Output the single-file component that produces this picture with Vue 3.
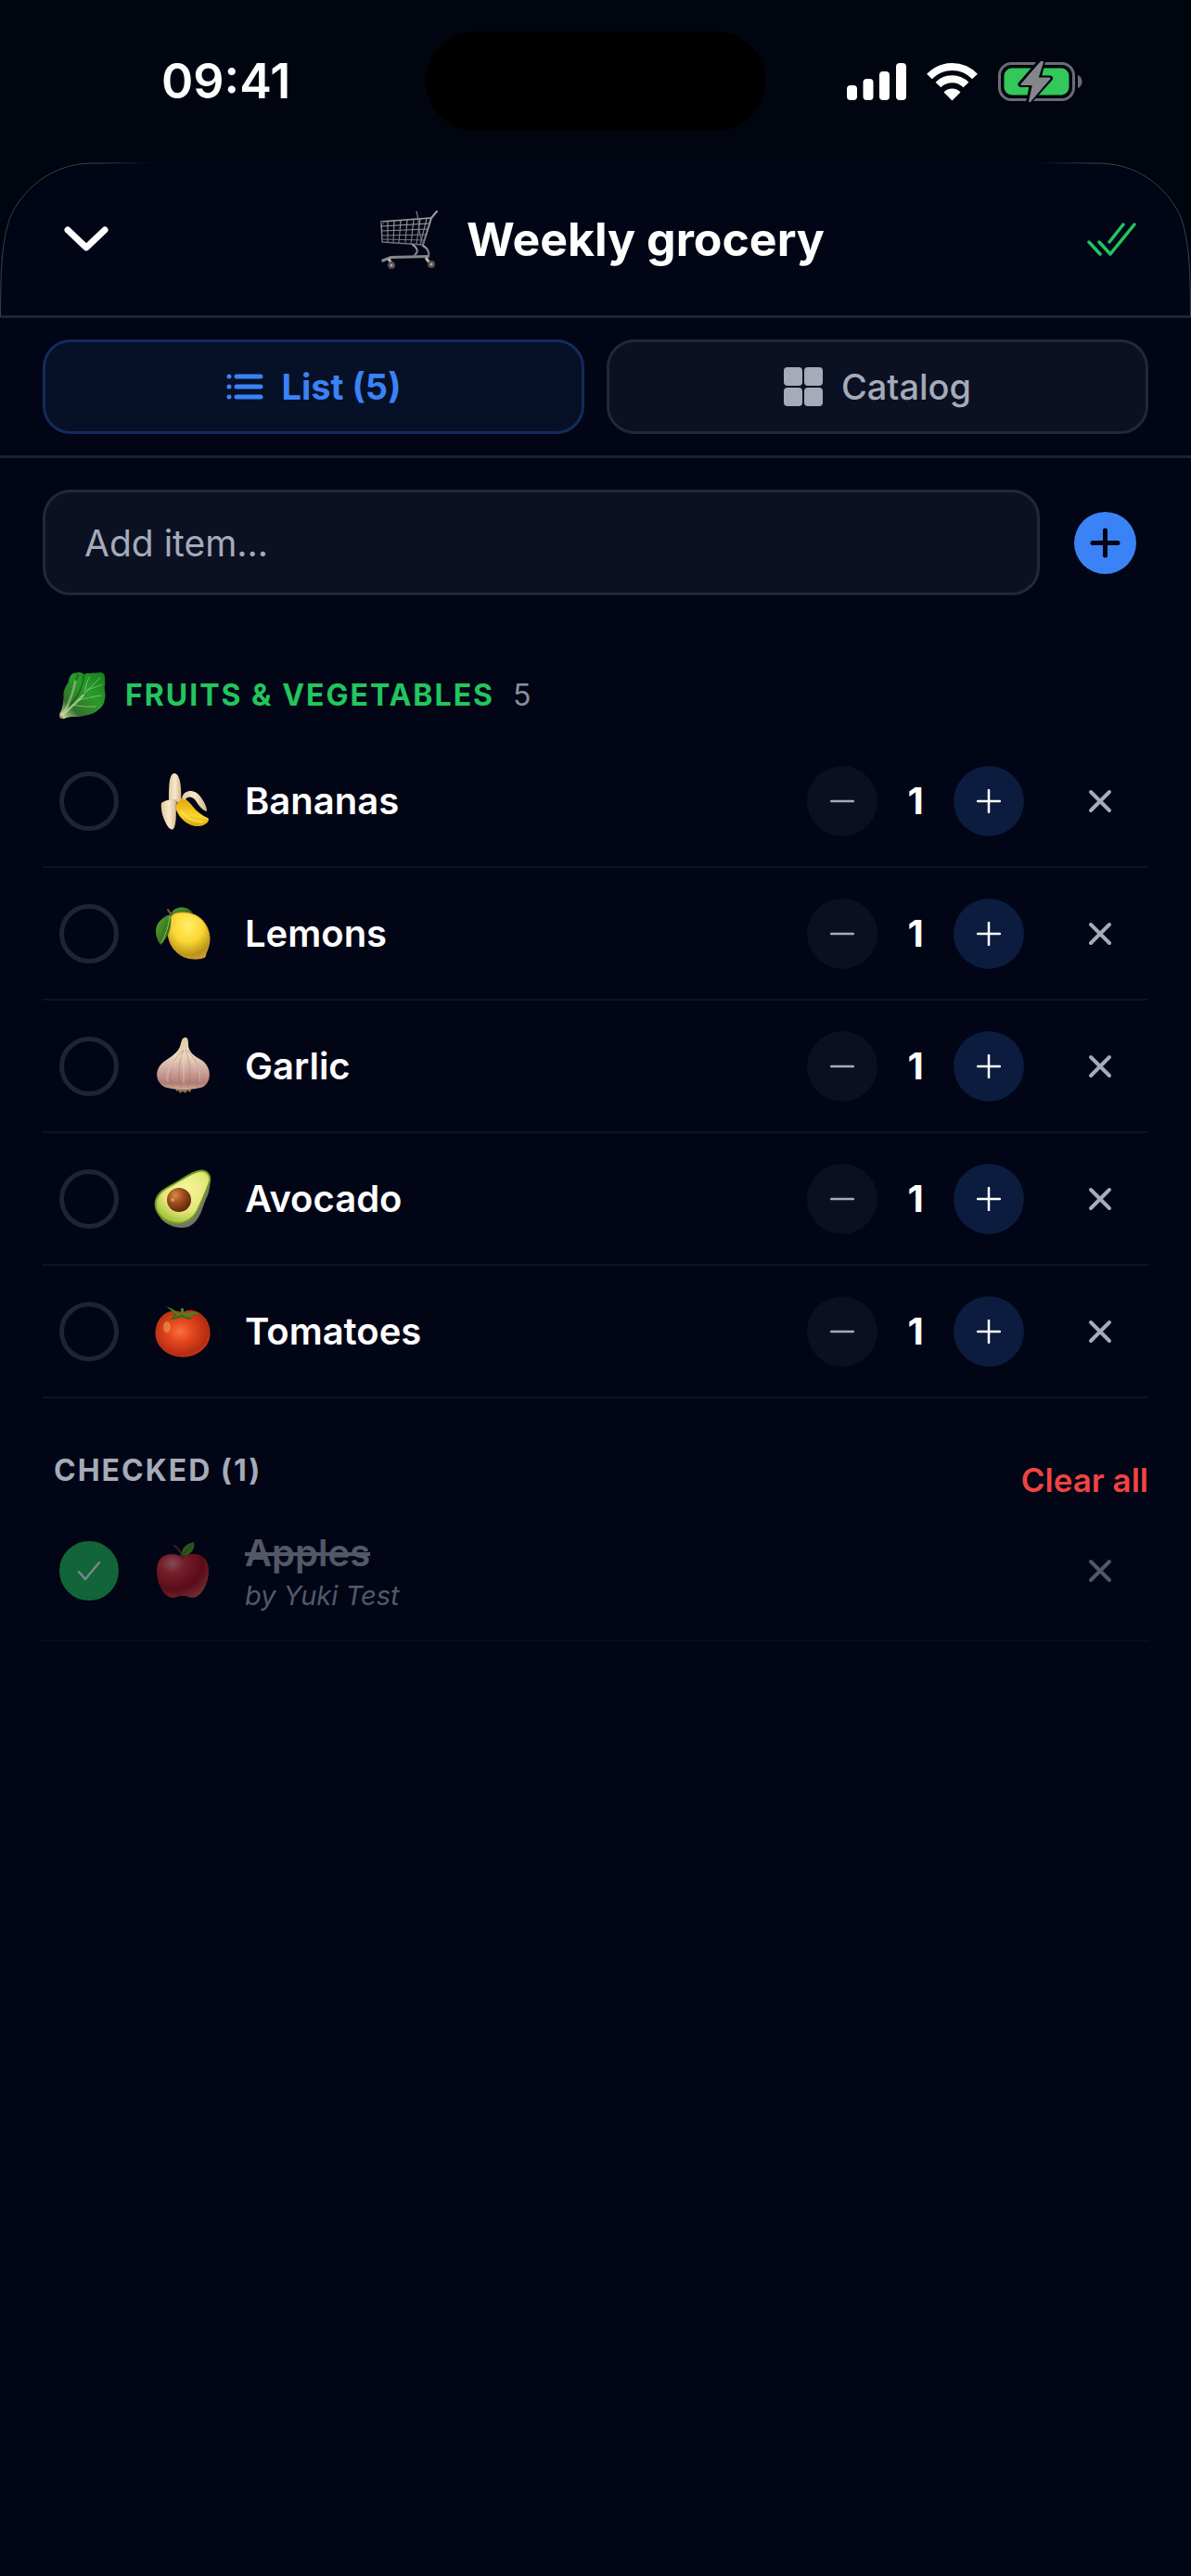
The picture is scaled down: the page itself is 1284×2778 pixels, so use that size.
<template>
  <div class="screen">
    <!-- shared food drawings -->
    <svg class="sprite" width="0" height="0" aria-hidden="true">
      <defs>
        <linearGradient id="gPeel" x1="0" y1="0" x2="1" y2="0">
          <stop offset="0" stop-color="#e2c9a0" />
          <stop offset="0.5" stop-color="#f8e8cc" />
          <stop offset="1" stop-color="#d3b58c" />
        </linearGradient>
        <linearGradient id="gBanana" x1="0.3" y1="0" x2="0.2" y2="1">
          <stop offset="0" stop-color="#e0a10c" />
          <stop offset="0.6" stop-color="#fbd52b" />
          <stop offset="1" stop-color="#c9a010" />
        </linearGradient>
        <radialGradient id="gLemon" cx="0.48" cy="0.28" r="0.8">
          <stop offset="0" stop-color="#fff06a" />
          <stop offset="0.45" stop-color="#fbd734" />
          <stop offset="0.8" stop-color="#b9951a" />
          <stop offset="1" stop-color="#d79a34" />
        </radialGradient>
        <linearGradient id="gLeaf" x1="0" y1="0" x2="1" y2="1">
          <stop offset="0" stop-color="#62a637" />
          <stop offset="1" stop-color="#1d5611" />
        </linearGradient>
        <linearGradient id="gGarlic" x1="0" y1="0" x2="0" y2="1">
          <stop offset="0" stop-color="#e3cca0" />
          <stop offset="0.35" stop-color="#ead7c0" />
          <stop offset="0.62" stop-color="#cfa79e" />
          <stop offset="0.88" stop-color="#b07c74" />
          <stop offset="1" stop-color="#cfae98" />
        </linearGradient>
        <radialGradient id="gAvocado" cx="0.55" cy="0.35" r="0.65">
          <stop offset="0" stop-color="#f7f5a0" />
          <stop offset="0.65" stop-color="#e3e777" />
          <stop offset="1" stop-color="#a8c43f" />
        </radialGradient>
        <radialGradient id="gPit" cx="0.35" cy="0.3" r="0.75">
          <stop offset="0" stop-color="#d98a48" />
          <stop offset="0.45" stop-color="#9c4e1c" />
          <stop offset="1" stop-color="#5d2609" />
        </radialGradient>
        <radialGradient id="gTomato" cx="0.45" cy="0.45" r="0.6">
          <stop offset="0" stop-color="#f9703e" />
          <stop offset="0.4" stop-color="#e2461f" />
          <stop offset="0.85" stop-color="#b52d12" />
          <stop offset="1" stop-color="#d83316" />
        </radialGradient>
        <radialGradient id="gApple" cx="0.3" cy="0.22" r="0.85">
          <stop offset="0" stop-color="#ff9a92" />
          <stop offset="0.25" stop-color="#ea3a3f" />
          <stop offset="0.7" stop-color="#b5111d" />
          <stop offset="1" stop-color="#e0504c" />
        </radialGradient>
        <linearGradient id="gGreens" x1="1" y1="0" x2="0" y2="1">
          <stop offset="0" stop-color="#14801f" />
          <stop offset="0.4" stop-color="#2a9a2c" />
          <stop offset="0.75" stop-color="#35702c" />
          <stop offset="1" stop-color="#e6f0b8" />
        </linearGradient>
        <linearGradient id="gSteel" x1="0" y1="0" x2="0" y2="1">
          <stop offset="0" stop-color="#a3a3a6" />
          <stop offset="1" stop-color="#6f7075" />
        </linearGradient>
        <linearGradient id="gEdge" x1="1" y1="0" x2="0.3" y2="0.3">
          <stop offset="0" stop-color="#3a3e4a" stop-opacity="0" />
          <stop offset="0.4" stop-color="#3a3e4a" />
          <stop offset="1" stop-color="#3a3e4a" />
        </linearGradient>
      </defs>

      <symbol id="bananas" viewBox="0 0 64 64">
        <path d="M28 30C31 26 38 31 43 38C48 44 54 48 59 50C62 52 58 58 50 59C38 60 27 50 24 38Z" fill="url(#gBanana)" />
        <path d="M30 42C35 50 44 55 54 54" fill="none" stroke="#ffe760" stroke-width="2" opacity="0.7" />
        <path d="M31 28C35 18 46 20 51 27C55 32 58 38 58 43C54 42 50 38 47 33C44 27 38 25 34 31Z" fill="url(#gPeel)" />
        <path d="M17 30C17 17 17 2 23 2C29 2 31 17 30 31C27 34 20 34 17 30Z" fill="url(#gPeel)" />
        <path d="M9 34C14 30 21 30 26 30C24 39 26 52 23 60C21 65 17 62 14 56C10 49 8 40 9 34Z" fill="url(#gPeel)" />
        <path d="M25 31C24 37 25 45 24 54" fill="none" stroke="#a88c5c" stroke-width="1" opacity="0.6" />
      </symbol>

      <symbol id="lemons" viewBox="0 0 64 64">
        <path d="M19 10C24 2 37 1 43 10C36 12 26 12 19 10Z" fill="url(#gLeaf)" />
        <path d="M18 13C24 9 32 8 40 10C54 13 61 26 61 38C61 46 57 51 56 57C50 60 38 60 30 55C17 47 13 32 18 13Z" fill="url(#gLemon)" stroke="#d9a336" stroke-width="1" />
        <path d="M19 11C9 14 3 21 3 29C3 36 6 41 8 44C16 37 21 25 19 11Z" fill="url(#gLeaf)" />
        <path d="M18 13C17 24 13 34 9 42" fill="none" stroke="#8cc261" stroke-width="1" />
        <path d="M20 12L16 6" stroke="#7c5a35" stroke-width="2" stroke-linecap="round" />
      </symbol>

      <symbol id="garlic" viewBox="0 0 64 64">
        <path d="M24 55H42L40 60L37 58L35 61L32 59L29 61L27 58L25 59Z" fill="#8d6b4c" />
        <path d="M34 1C37 0 38 3 38 8C38 17 45 21 52 25C64 33 63 49 54 54C44 58 22 58 12 54C2 48 1 34 13 26C22 20 29 15 30 7C31 3 32 1 34 1Z" fill="url(#gGarlic)" />
        <path d="M32 15C20 26 15 42 21 55M33 14C27 29 27 43 30 56M35 14C40 28 41 43 38 56M37 15C48 25 52 42 46 55" fill="none" stroke="#a37268" stroke-width="1" opacity="0.45" />
        <path d="M26 25C16 34 14 43 16 49M33 24V50M42 25C49 33 51 41 50 48" fill="none" stroke="#fff1e2" stroke-width="2" opacity="0.2" />
      </symbol>

      <symbol id="avocado" viewBox="0 0 64 64">
        <path d="M53 5C63 4 63 16 59 28C53 39 52 56 38 62C27 65 16 61 8 53Z" fill="#77736a" />
        <path d="M49 2C58 0 64 7 60 16C56 27 53 33 49 42C45 52 35 60 23 58C10 56 1 46 3 34C6 22 20 18 29 12C36 8 41 4 49 2Z" fill="url(#gAvocado)" stroke="#6f9a26" stroke-width="2" />
        <ellipse cx="28" cy="33" rx="13" ry="13" fill="url(#gPit)" />
        <circle cx="21" cy="33" r="2" fill="#eeb58a" opacity="0.6" />
      </symbol>

      <symbol id="tomatoes" viewBox="0 0 64 64">
        <path d="M32 12C40 5 61 12 61 34C61 50 46 59 32 59C17 59 3 49 3 34C3 15 18 6 32 12Z" fill="url(#gTomato)" stroke="#c23615" stroke-width="1" />
        <ellipse cx="15" cy="27" rx="4" ry="6" fill="#f0a049" opacity="0.6" />
        <path d="M18 12C24 12 27 16 31 16C38 16 43 13 50 13C43 9 37 12 33 14L33 7L30 7L30 14C26 12 23 7 14 5C18 8 21 10 24 13Z" fill="#3c8b1d" />
        <path d="M25 13C22 14 22 17 21 18C27 18 28 15 31 15C35 17 38 18 41 18" fill="none" stroke="#2f6e17" stroke-width="2" />
      </symbol>

      <symbol id="apples" viewBox="0 0 64 64">
        <path d="M32 17C42 11 60 12 60 32C60 47 51 61 43 61C39 61 37 59 32 59C27 59 25 61 21 61C12 61 4 46 4 32C4 13 20 11 32 17Z" fill="url(#gApple)" />
        <path d="M32 19C31 12 28 8 23 5" fill="none" stroke="#7b4028" stroke-width="2" stroke-linecap="round" />
        <path d="M31 16C30 8 35 3 44 1C46 9 40 16 31 16Z" fill="#57a526" />
        <path d="M32 15L42 4" stroke="#2f6d14" stroke-width="1" />
      </symbol>

      <symbol id="greens" viewBox="0 0 64 64">
        <path d="M4 55C8 49 8 42 9 34C8 25 12 20 15 15C16 7 20 2 26 3C30 1 34 4 36 5C39 2 43 5 46 3C50 4 56 1 60 4C63 8 61 12 62 17C60 23 63 28 62 34C61 41 60 45 55 49C49 55 42 57 35 58C27 60 18 58 11 61C8 64 3 59 4 55Z" fill="url(#gGreens)" />
        <path d="M16 43C18 32 22 18 28 5M35 5C34 18 28 33 18 44" fill="none" stroke="#0f5a1b" stroke-width="2" opacity="0.7" />
        <path d="M6 58C21 46 39 26 56 9M26 38C38 36 48 33 57 32M20 44C32 46 42 47 50 46M36 28C37 20 40 12 42 8M39 25C47 22 54 20 58 18" fill="none" stroke="#a8db84" stroke-width="1" stroke-linecap="round" opacity="0.7" />
        <path d="M6 58C16 50 26 40 34 32M8 56C14 47 19 36 24 14" fill="none" stroke="#d7eeb0" stroke-width="3" stroke-linecap="round" opacity="0.5" />
        <path d="M4 56L9 61C6 63 2 60 4 56Z" fill="#a98a65" />
      </symbol>

      <symbol id="cart" viewBox="0 0 64 64">
        <g fill="none" stroke="url(#gSteel)" stroke-linecap="round" stroke-linejoin="round">
          <path d="M2 13L56 9L47 38L3 35Z" stroke-width="1.4" />
          <path d="M2 18L54 15M3 23L52 21M3 28L51 27M3 32L49 33" stroke-width="1.1" />
          <path d="M9 13V35M16 12L15 36M23 12L21 36M30 11L28 36M37 11L34 37M44 10L40 37M51 10L44 38" stroke-width="1.1" />
          <path d="M40 2C43 12 42 24 46 36" stroke-width="1" />
          <path d="M47 38L56 9L62 2" stroke-width="2" />
          <path d="M36 38C42 42 42 46 38 49M47 39C53 42 54 46 53 51" stroke-width="2" />
        </g>
        <path d="M2 54L12 50L53 49V52L13 53L3 57Z" fill="#85868b" />
        <path d="M10 53L14 60M50 52L56 60" stroke="#b9b6b3" stroke-width="3" />
        <circle cx="13" cy="60" r="4" fill="#57504c" />
        <circle cx="56" cy="59" r="4" fill="#57504c" />
        <circle cx="13" cy="60" r="1.5" fill="#b8aaa2" />
        <circle cx="56" cy="59" r="1.5" fill="#b8aaa2" />
        <path d="M2 13H5V16H2Z" fill="#17455c" />
      </symbol>
    </svg>

    <div class="status">
      <time class="clock">09:41</time>
      <div class="island"></div>
      <div class="indicators">
        <svg width="64" height="42" viewBox="0 0 64 42" fill="#fff" aria-hidden="true">
          <rect x="0" y="25" width="11" height="16" rx="4" />
          <rect x="17.500" y="18" width="11" height="23" rx="4" />
          <rect x="35" y="10" width="11" height="31" rx="4" />
          <rect x="53" y="1" width="11" height="40" rx="4" />
        </svg>
        <svg width="57" height="42" viewBox="0 0 57 42" aria-hidden="true">
          <path d="M28.500 41.500L19.500 32.500C24 27 33 27 37.500 32.500Z" fill="#fff" />
          <path d="M13.500 24.500C21.500 16 35.500 16 43.500 24.500M4 15.500C17.500 1.500 39.500 1.500 53 15.500" fill="none" stroke="#fff" stroke-width="8" />
        </svg>
        <svg width="91" height="44" viewBox="0 0 91 44" aria-hidden="true">
          <rect x="1.500" y="2.500" width="80" height="39" rx="13" fill="none" stroke="#6b6d74" stroke-width="3" />
          <rect x="6.500" y="7.500" width="70" height="29" rx="8.500" fill="#34c759" />
          <path d="M86 15C92 17 92 27 86 29Z" fill="#6b6d74" />
          <path d="M46 0L24.500 25H37L33 44L56 18.500H43.500L48 0Z" fill="#85868b" stroke="#010510" stroke-width="6" stroke-linejoin="round" />
          <path d="M46.500 1L25.500 25H38L34 43.500L55.500 18.500H42.500L48 1Z" fill="#85868b" stroke="#85868b" stroke-width="2" stroke-linejoin="round" />
        </svg>
      </div>
    </div>

    <main class="sheet">
      <svg class="corner left" width="166" height="166" viewBox="0 0 166 166" aria-hidden="true">
        <path d="M0.500 166C0.500 100 4 82 10 62C17 42 46 1 100 1L165 0.500" fill="none" stroke="url(#gEdge)" stroke-width="1" />
      </svg>
      <svg class="corner right" width="166" height="166" viewBox="0 0 166 166" aria-hidden="true">
        <path d="M0.500 166C0.500 100 4 82 10 62C17 42 46 1 100 1L165 0.500" fill="none" stroke="url(#gEdge)" stroke-width="1" />
      </svg>

      <header class="header">
        <button class="back" aria-label="Close list">
          <svg width="48" height="30" viewBox="0 0 48 30" aria-hidden="true">
            <path d="M4 5L24 24L44 5" fill="none" stroke="#fff" stroke-width="7" stroke-linecap="round" stroke-linejoin="round" />
          </svg>
        </button>
        <div class="title">
          <svg width="64" height="64" aria-hidden="true"><use href="#cart" /></svg>
          <h1>Weekly grocery</h1>
        </div>
        <button class="check-all" aria-label="Check all" @click="checkAll">
          <svg width="53" height="36" viewBox="0 0 53 36" fill="none" stroke="#22c55e" stroke-width="3.500" stroke-linecap="round" stroke-linejoin="round" aria-hidden="true">
            <path d="M2 21L14 34M13 21L25 34L51 2M24 21L39 2" />
          </svg>
        </button>
      </header>

      <nav class="tabs">
        <button class="tab" :class="{ active: tab === 'list' }" @click="tab = 'list'">
          <svg width="40" height="30" viewBox="0 0 40 30" fill="none" stroke="currentColor" stroke-width="5" stroke-linecap="round" aria-hidden="true">
            <path d="M11 4H37M11 15H37M11 26H37M3 4H3.010M3 15H3.010M3 26H3.010" />
          </svg>
          List ({{ items.length }})
        </button>
        <button class="tab" :class="{ active: tab === 'catalog' }" @click="tab = 'catalog'">
          <svg width="42" height="42" viewBox="0 0 42 42" fill="currentColor" aria-hidden="true">
            <rect x="0" y="0" width="20" height="20" rx="4" />
            <rect x="22" y="0" width="20" height="20" rx="4" />
            <rect x="0" y="22" width="20" height="20" rx="4" />
            <rect x="22" y="22" width="20" height="20" rx="4" />
          </svg>
          Catalog
        </button>
      </nav>

      <div class="content">
        <form class="add" @submit.prevent="addItem">
          <input v-model="draft" type="text" placeholder="Add item..." aria-label="Add item" />
          <button aria-label="Add">
            <svg width="67" height="67" viewBox="0 0 67 67" aria-hidden="true">
              <circle cx="33.500" cy="33.500" r="33.500" fill="#3b82f6" />
              <path d="M20 33.500H47M33.500 20V47" stroke="#020617" stroke-width="5" stroke-linecap="round" />
            </svg>
          </button>
        </form>

        <section>
          <h2 class="category">
            <svg width="54" height="54" aria-hidden="true"><use href="#greens" /></svg>
            <span>FRUITS &amp; VEGETABLES</span>
            <span class="count">{{ items.length }}</span>
          </h2>
          <ul>
            <li v-for="item in items" :key="item.id" class="row">
              <input type="checkbox" :aria-label="item.name" @change="toggle(item, true)" />
              <svg class="food" width="64" height="64" aria-hidden="true"><use :href="'#' + item.icon" /></svg>
              <div class="name">{{ item.name }}</div>
              <div class="stepper">
                <button aria-label="Less" @click="item.count = Math.max(1, item.count - 1)">
                  <svg width="26" height="26" viewBox="0 0 26 26" aria-hidden="true">
                    <path d="M1 13H25" stroke="#a5abb8" stroke-width="2.500" stroke-linecap="round" />
                  </svg>
                </button>
                <span>{{ item.count }}</span>
                <button class="more" aria-label="More" @click="item.count++">
                  <svg width="26" height="26" viewBox="0 0 26 26" aria-hidden="true">
                    <path d="M1 13H25M13 1V25" stroke="#fff" stroke-width="2.500" stroke-linecap="round" />
                  </svg>
                </button>
              </div>
              <button class="remove" aria-label="Remove" @click="remove(item)">
                <svg width="26" height="26" viewBox="0 0 26 26" aria-hidden="true">
                  <path d="M3 3L23 23M23 3L3 23" stroke="#a5abb8" stroke-width="4" stroke-linecap="round" />
                </svg>
              </button>
            </li>
          </ul>
        </section>

        <section v-if="checked.length">
          <div class="checked-head">
            <h2>CHECKED ({{ checked.length }})</h2>
            <button @click="checked = []">Clear all</button>
          </div>
          <ul>
            <li v-for="item in checked" :key="item.id" class="row done">
              <label class="tick">
                <input type="checkbox" checked :aria-label="item.name" @change="toggle(item, false)" />
                <svg width="26" height="22" viewBox="0 0 26 22" aria-hidden="true">
                  <path d="M2 12L9 20L24 2" fill="none" stroke="#fff" stroke-width="2.500" stroke-linecap="round" stroke-linejoin="round" />
                </svg>
              </label>
              <svg class="food" width="64" height="64" aria-hidden="true"><use :href="'#' + item.icon" /></svg>
              <div class="name">
                <s>{{ item.name }}</s>
                <div v-if="item.by" class="by">by {{ item.by }}</div>
              </div>
              <button class="remove" aria-label="Remove" @click="remove(item)">
                <svg width="26" height="26" viewBox="0 0 26 26" aria-hidden="true">
                  <path d="M3 3L23 23M23 3L3 23" stroke="#a5abb8" stroke-width="4" stroke-linecap="round" />
                </svg>
              </button>
            </li>
          </ul>
        </section>
      </div>
    </main>
  </div>
</template>

<script setup>
import { ref } from "vue";

const tab = ref("list")
const draft = ref("")

const items = ref([
  { id: 1, name: "Bananas", icon: "bananas", count: 1 },
  { id: 2, name: "Lemons", icon: "lemons", count: 1 },
  { id: 3, name: "Garlic", icon: "garlic", count: 1 },
  { id: 4, name: "Avocado", icon: "avocado", count: 1 },
  { id: 5, name: "Tomatoes", icon: "tomatoes", count: 1 },
])

const checked = ref([
  { id: 6, name: "Apples", icon: "apples", count: 1, by: "Yuki Test" },
])

const addItem = () => {
  const name = draft.value.trim()
  if (!name) return
  items.value.push({ id: Date.now(), name, icon: "greens", count: 1 })
  draft.value = ""
}

const remove = (item) => {
  items.value = items.value.filter(i => i.id !== item.id)
  checked.value = checked.value.filter(i => i.id !== item.id)
}

const toggle = (item, done) => {
  remove(item)
  const target = done ? checked : items
  target.value.push(item)
}

const checkAll = () => {
  checked.value.push(...items.value)
  items.value = []
}
</script>

<style>
body {
  margin: 0;
  background: #010510;
}
</style>

<style scoped>
.screen {
  min-height: 100vh;
  display: flex;
  flex-direction: column;
  background: #010510;
  color: #fff;
  font-family: Inter, "Liberation Sans", sans-serif;
}

.sprite {
  position: absolute;
}

button {
  display: flex;
  align-items: center;
  justify-content: center;
  padding: 0;
  border: none;
  background: none;
  color: inherit;
  font: inherit;
  cursor: pointer;
}

h1,
h2,
ul {
  margin: 0;
  padding: 0;
  list-style: none;
}

.status {
  display: grid;
  grid-template-columns: 1fr 366px 1fr;
  align-items: center;
  height: 175px;
}

.clock {
  padding-left: 174px;
  font-size: 52px;
  font-weight: 600;
}

.island {
  height: 107px;
  border-radius: 54px;
  background: #000;
}

.indicators {
  display: flex;
  align-items: center;
  justify-content: flex-end;
  gap: 21px;
  padding-right: 117px;
}

.sheet {
  position: relative;
  flex: 1;
  border-radius: 110px 110px 0 0;
  background: #010515;
}

.corner {
  position: absolute;
  top: 0;
  pointer-events: none;
}

.corner.left {
  left: 0;
}

.corner.right {
  right: 0;
  transform: scaleX(-1);
}

.header {
  display: flex;
  align-items: center;
  height: 165px;
  padding: 0 46px;
  border-bottom: 3px solid #1c2331;
}

.back {
  width: 94px;
  height: 94px;
}

.check-all {
  width: 80px;
  height: 80px;
}

.title {
  flex: 1;
  display: flex;
  align-items: center;
  justify-content: center;
  gap: 30px;
}

.title h1 {
  font-size: 50px;
  font-weight: 700;
}

.tabs {
  display: flex;
  gap: 24px;
  padding: 23px 46px;
  border-bottom: 3px solid #1c2030;
}

.tab {
  flex: 1;
  gap: 20px;
  height: 102px;
  border: 3px solid #1f293b;
  border-radius: 30px;
  background: #0b1123;
  color: #a5abb8;
  font-size: 38px;
  font-weight: 500;
}

.tab.active {
  border-color: #132b5c;
  background: #061026;
  color: #3b82f6;
  font-weight: 700;
}

.content {
  padding: 34px 46px;
}

.add {
  display: flex;
  gap: 24px;
  margin-bottom: 64px;
}

.add input {
  flex: 1;
  min-width: 0;
  height: 114px;
  box-sizing: border-box;
  padding: 0 42px;
  border: 3px solid #1f293b;
  border-radius: 30px;
  background: #0b1123;
  color: #fff;
  font-family: inherit;
  font-size: 39px;
}

.add input::placeholder {
  color: #a5abb8;
  opacity: 1;
}

.add button {
  width: 93px;
}

.category {
  display: flex;
  align-items: center;
  gap: 20px;
  height: 87px;
  padding-left: 15px;
  color: #22c55e;
  font-size: 32px;
  font-weight: 700;
  letter-spacing: 2px;
}

.count {
  color: #8a8f9d;
  font-weight: 400;
}

.row {
  display: flex;
  align-items: center;
  min-height: 143px;
  box-sizing: border-box;
  padding: 28px 0 28px 18px;
  border-bottom: 2px solid #0f1320;
}

.row input {
  flex: none;
  width: 64px;
  height: 64px;
  box-sizing: border-box;
  margin: 0;
  appearance: none;
  border: 5px solid #1f2333;
  border-radius: 50%;
  cursor: pointer;
}

.row input:checked {
  border-color: #22c55e;
  background: #22c55e;
}

.tick {
  position: relative;
  display: flex;
}

/* mark sits on top of the filled circle */
.tick svg {
  position: absolute;
  inset: 0;
  margin: auto;
}

.food {
  flex: none;
  margin: 0 35px 0 37px;
}

.name {
  flex: 1;
  font-size: 40px;
  font-weight: 600;
  line-height: 54px;
}

.stepper {
  display: flex;
  align-items: center;
}

.stepper button {
  width: 76px;
  height: 76px;
  border-radius: 50%;
  background: #0a1021;
}

.stepper .more {
  background: #0c1c3f;
}

.stepper span {
  min-width: 82px;
  text-align: center;
  font-size: 40px;
  font-weight: 700;
}

.remove {
  width: 105px;
  height: 76px;
  margin-left: 29px;
}

.checked-head {
  display: flex;
  align-items: flex-start;
  justify-content: space-between;
  padding: 56px 0 0 12px;
}

.checked-head h2 {
  color: #a5abb8;
  font-size: 32px;
  font-weight: 700;
  line-height: 44px;
  letter-spacing: 2px;
}

.checked-head button {
  padding-top: 8px;
  color: #ef4444;
  font-size: 35px;
  font-weight: 600;
  line-height: 48px;
}

.done {
  border-color: #090d1b;
}

.done .tick,
.done .food,
.done .name,
.done .remove {
  opacity: 0.5;
}

.done .name {
  color: #a5abb8;
}

.done s {
  display: inline-block;
}

.by {
  font-size: 29px;
  font-style: italic;
  font-weight: 400;
  line-height: 38px;
}
</style>
